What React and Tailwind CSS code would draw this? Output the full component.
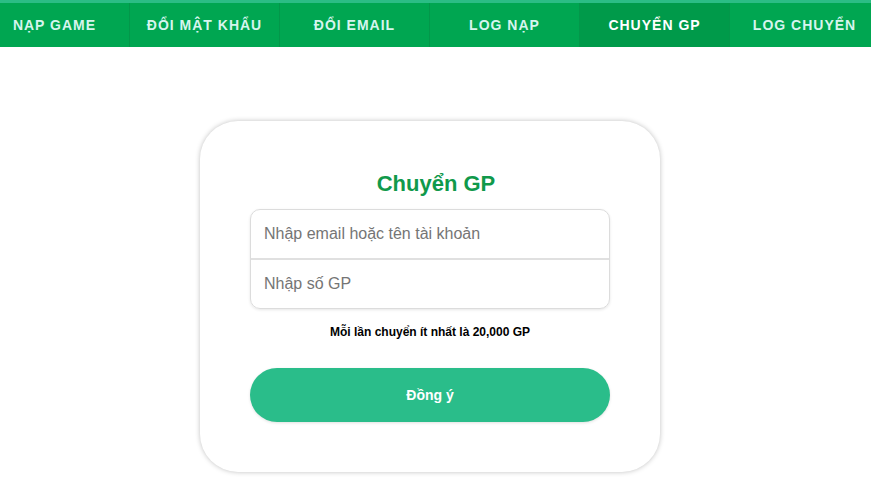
import React from "react";

const items = ["NẠP GAME", "ĐỔI MẬT KHẨU", "ĐỔI EMAIL", "LOG NẠP", "CHUYỂN GP", "LOG CHUYỂN"];

export default function App() {
  return (
    <div className="min-h-[478px] bg-white" style={{ fontFamily: '"Liberation Sans", Arial, sans-serif' }}>
      <div className="h-[3px] bg-[#2bbd85]" />
      <nav className="h-[44px] bg-[#00a651] overflow-hidden">
        <ul className="flex h-full ml-[-20px]">
          {items.map((t, i) => (
            <li
              key={t}
              className={
                "shrink-0 w-[150px] h-full flex items-center justify-center text-[14px] font-bold tracking-[1px] border-r border-[#03974a] " +
                (i === 4 ? "bg-[#009a4a] text-white" : "text-[#d6f5ee]")
              }
            >
              {t}
            </li>
          ))}
        </ul>
      </nav>
      <div className="flex justify-center pt-[74px] pr-[11px]">
        <div className="w-[460px] h-[351px] bg-white rounded-[38px] shadow-[0_0_5px_rgba(0,0,0,0.25)] px-[50px] pt-[50px] flex flex-col items-center">
          <h1 className="pl-[12px] text-[22px] leading-[26px] font-bold text-[#10994b]">Chuyển GP</h1>
          <div className="mt-[12px] w-[360px] rounded-[10px] border border-[#dcdcdc] shadow-[0_1px_3px_rgba(0,0,0,0.1)] overflow-hidden">
            <div className="h-[50px] flex items-center px-[13px] text-[16px] text-[#757575] border-b-2 border-[#e0e0e0]">
              Nhập email hoặc tên tài khoản
            </div>
            <div className="h-[48px] flex items-center px-[13px] text-[16px] text-[#757575]">Nhập số GP</div>
          </div>
          <p className="mt-[14px] text-[12px] font-bold text-black">Mỗi lần chuyển ít nhất là 20,000 GP</p>
          <button className="mt-[27px] w-[360px] h-[54px] rounded-full bg-[#2abd8a] text-white text-[14px] font-bold shadow-[0_1px_3px_rgba(0,0,0,0.12)]">
            Đồng ý
          </button>
        </div>
      </div>
    </div>
  );
}
